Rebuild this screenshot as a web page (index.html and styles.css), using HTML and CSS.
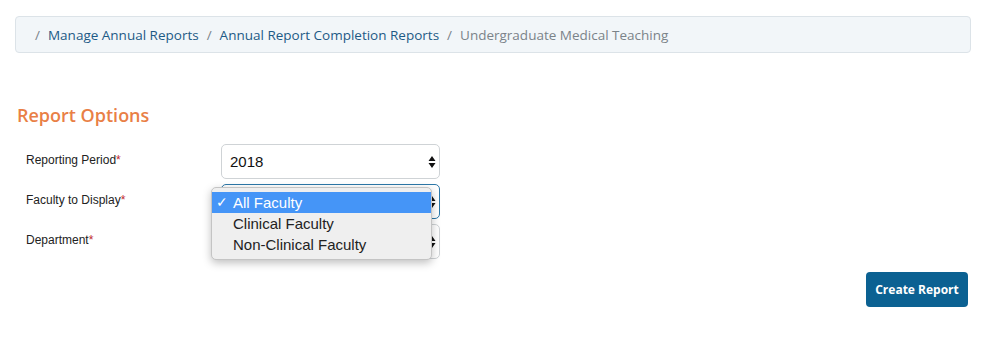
FILE: index.html
```html
<!DOCTYPE html>
<html>
<head>
<meta charset="utf-8">
<link rel="stylesheet" href="styles.css">
</head>
<body>
<div class="page">
  <nav class="crumbs">
    <span class="sep">/</span><a class="crumb">Manage Annual Reports</a>
    <span class="sep">/</span><a class="crumb">Annual Report Completion Reports</a>
    <span class="sep">/</span><span class="current">Undergraduate Medical Teaching</span>
  </nav>
  <h2 class="title">Report Options</h2>
  <div class="form">
    <label class="lbl">Reporting Period<span class="req">*</span></label>
    <div class="select"><span>2018</span><svg class="arrows" width="8" height="14" viewBox="0 0 8 14"><path d="M4 1 L7.5 6 H0.5Z M4 13 L7.5 8 H0.5Z" fill="#111"/></svg></div>
    <label class="lbl">Faculty to Display<span class="req">*</span></label>
    <div class="select focus top"><span></span><svg class="arrows" width="8" height="14" viewBox="0 0 8 14"><path d="M4 1 L7.5 6 H0.5Z M4 13 L7.5 8 H0.5Z" fill="#111"/></svg>
      <ul class="menu">
        <li class="opt on"><span class="check">✓</span>All Faculty</li>
        <li class="opt"><span class="check"></span>Clinical Faculty</li>
        <li class="opt"><span class="check"></span>Non-Clinical Faculty</li>
      </ul>
    </div>
    <label class="lbl">Department<span class="req">*</span></label>
    <div class="select"><span></span><svg class="arrows" width="8" height="14" viewBox="0 0 8 14"><path d="M4 1 L7.5 6 H0.5Z M4 13 L7.5 8 H0.5Z" fill="#111"/></svg></div>
  </div>
  <div class="actions"><button class="btn">Create Report</button></div>
</div>
</body>
</html>
```
FILE: styles.css
```css
* { box-sizing: border-box; }
html, body { margin: 0; padding: 0; background: #fff; }
.page { padding: 16px 15px 0 15px; width: 986px; }
.crumbs {
  width: 956px; height: 37px;
  background: #f2f6f9; border: 1px solid #dce3e8; border-radius: 4px;
  display: flex; align-items: center; padding: 0 0 0 19px;
  font-family: "Open Sans", sans-serif; font-size: 13.5px;
}
.sep { color: #7b8389; margin-right: 8px; }
.crumb { color: #1d5a86; margin-right: 8px; text-decoration: none; }
.current { color: #7b8389; }
.title {
  margin: 51px 0 0 2px; font-family: "Open Sans", sans-serif; font-weight: 600;
  font-size: 18px; line-height: 22px; color: #e97f46;
}
.form {
  margin: 18px 0 0 11px;
  display: grid; grid-template-columns: 195px 219px; row-gap: 5px;
}
.lbl {
  font-family: "Liberation Sans", Arial, sans-serif; font-size: 12px; color: #222;
  padding-top: 9px; height: 35px;
}
.req { color: #c0282d; }
.select {
  position: relative; height: 35px; border: 1px solid #cfd3d6; border-radius: 5px;
  display: flex; align-items: center; justify-content: space-between;
  padding: 0 3px 0 8px;
  font-family: "Liberation Sans", Arial, sans-serif; font-size: 15px; color: #111;
}
.select.focus { border-color: #2d78a8; }
.select.top { z-index: 5; }
.arrows { flex: none; }
.menu {
  position: absolute; left: -11px; top: 2px; width: 221px; margin: 0; padding: 4px 0 4px;
  list-style: none; background: #efefef; border: 1px solid #c4c4c4; border-radius: 5px;
  box-shadow: 0 3px 8px rgba(0,0,0,0.25); z-index: 10;
}
.opt { height: 21px; line-height: 21px; font-size: 15px; color: #222; display: flex; }
.opt.on { background: #4595f7; color: #fff; }
.check { width: 21px; padding-left: 4px; font-size: 14px; }
.actions { display: flex; justify-content: flex-end; margin-top: 13px; padding-right: 3px; }
.btn {
  width: 102px; height: 35px; border: none; border-radius: 4px; background: #0b6192;
  color: #fff; font-family: "Open Sans", sans-serif; font-weight: 700; font-size: 12px;
  padding: 0;
}
```
